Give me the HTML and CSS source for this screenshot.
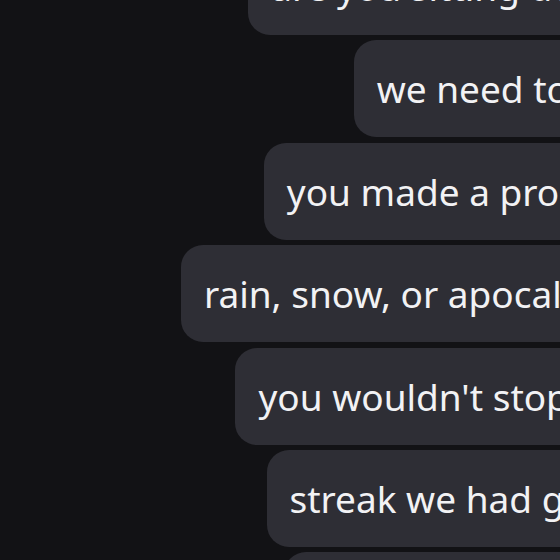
FILE: index.html
```html
<!DOCTYPE html>
<html lang="en">

<head>
    <meta charset="UTF-8">
    <meta name="viewport" content="width=device-width, initial-scale=1.0">
    <title>Chat</title>
    <link rel="stylesheet" href="styles.css">
</head>

<body>
    <div class="chat">
        <div class="bubble">are you sitting down?</div>
        <div class="bubble">we need to talk</div>
        <div class="bubble">you made a promise</div>
        <div class="bubble">rain, snow, or apocalypse</div>
        <div class="bubble">you wouldn't stop this</div>
        <div class="bubble">streak we had going</div>
        <div class="bubble">for ten whole years</div>
    </div>
</body>

</html>
```

FILE: styles.css
```css
html,
body {
    height: 100%;
}

body {
    font-family: "Noto Sans", "Open Sans", sans-serif;
    background-color: #121215;
    color: #f2f2f4;
    margin: 0;
    overflow: hidden;
}

.chat {
    width: 665px;
    margin-top: -62px; /* scrolled: first message is half out of view */
    display: flex;
    flex-direction: column;
    align-items: flex-end;
    gap: 5.4px;
}

.bubble {
    background-color: #2e2e35;
    border-radius: 22px;
    padding: 0 23px;
    height: 97px;
    line-height: 97px;
    font-size: 37px;
    white-space: nowrap;
}
```
